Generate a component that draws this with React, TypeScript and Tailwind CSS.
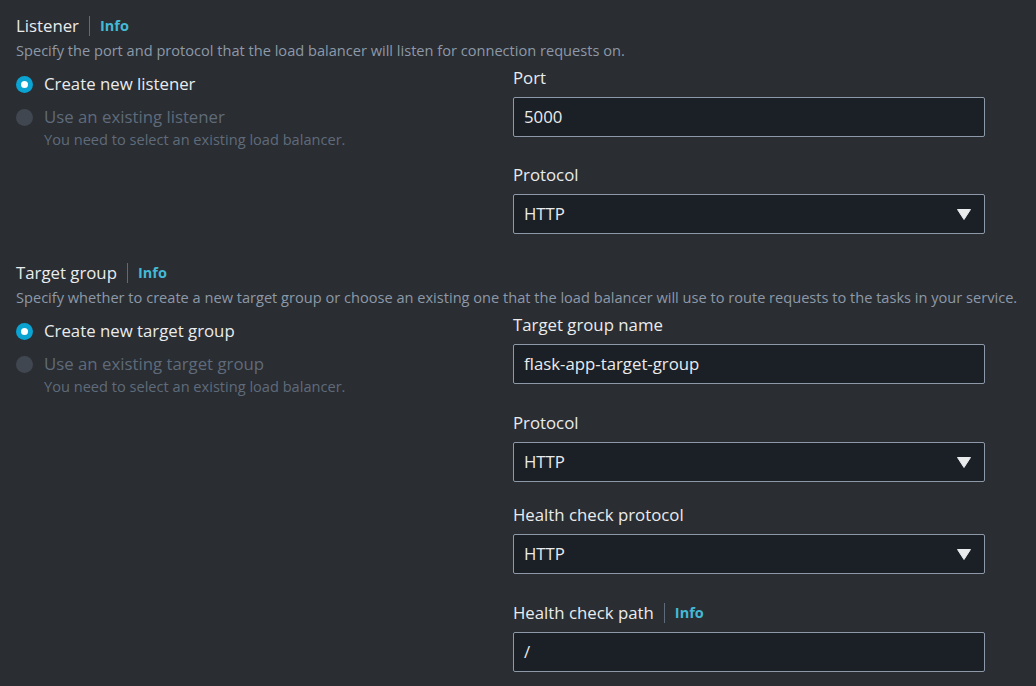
import React from "react";

const Info = () => (
  <>
    <span className="mx-[10px] h-[20px] w-px bg-[#5f6b7a]" />
    <span className="text-[14.5px] font-bold text-[#44b9d6]">Info</span>
  </>
);

const Radio = ({ checked, label, help }: { checked?: boolean; label: string; help?: string }) => (
  <div className="flex items-start gap-[11px]">
    <span
      className={
        checked
          ? "mt-[4px] flex h-[17px] w-[17px] items-center justify-center rounded-full bg-[#0aa3d2]"
          : "mt-[4px] h-[17px] w-[17px] rounded-full bg-[#414750]"
      }
    >
      {checked && <span className="h-[7px] w-[7px] rounded-full bg-white" />}
    </span>
    <div className="flex flex-col">
      <span className={checked ? "text-[16.8px] leading-[24px] text-[#e9ebed]" : "text-[16.8px] leading-[24px] text-[#5f6b7a]"}>
        {label}
      </span>
      {help && <span className="text-[14.6px] leading-[20px] text-[#5f6b7a]">{help}</span>}
    </div>
  </div>
);

const Field = ({
  label,
  value,
  select,
  info,
  gap = "mt-[27px]",
}: {
  label: string;
  value: string;
  select?: boolean;
  info?: boolean;
  gap?: string;
}) => (
  <div className={`flex flex-col ${gap}`}>
    <div className="flex h-[22px] items-center text-[16.8px] text-[#e9ebed]">
      {label}
      {info && <Info />}
    </div>
    <div className="mt-[8px] flex h-[40px] items-center justify-between rounded-[2px] border border-[#8d99a8] bg-[#1b1f26] pl-[10px] pr-[13px] text-[16.8px] text-[#e9ebed]">
      <span>{value}</span>
      {select && (
        <svg width="14" height="11" viewBox="0 0 14 11">
          <path d="M0.5 0.5h13L7 10.5z" fill="#e9ebed" stroke="#e9ebed" strokeLinejoin="round" />
        </svg>
      )}
    </div>
  </div>
);

const Section = ({
  title,
  desc,
  create,
  existing,
  fields,
}: {
  title: string;
  desc: string;
  create: string;
  existing: string;
  fields: React.ReactNode;
}) => (
  <section className="flex flex-col">
    <div className="flex h-[26px] items-center text-[16.8px] text-[#e9ebed]">
      {title}
      <Info />
    </div>
    <p className="mt-[1px] text-[14.6px] leading-[20px] text-[#8d99a8]">{desc}</p>
    <div className="mt-[4px] grid grid-cols-[497px_472px]">
      <div className="flex flex-col gap-[9px] pt-[8px]">
        <Radio checked label={create} />
        <Radio label={existing} help="You need to select an existing load balancer." />
      </div>
      <div className="flex flex-col pt-[3px]">{fields}</div>
    </div>
  </section>
);

export default function App() {
  return (
    <div
      className="flex h-[686px] w-[1036px] flex-col gap-[26px] overflow-hidden bg-[#2a2d32] pl-[16px] pt-[13px]"
      style={{ fontFamily: "'Open Sans', 'Noto Sans', sans-serif" }}
    >
      <Section
        title="Listener"
        desc="Specify the port and protocol that the load balancer will listen for connection requests on."
        create="Create new listener"
        existing="Use an existing listener"
        fields={
          <>
            <Field label="Port" value="5000" gap="" />
            <Field label="Protocol" value="HTTP" select />
          </>
        }
      />
      <Section
        title="Target group"
        desc="Specify whether to create a new target group or choose an existing one that the load balancer will use to route requests to the tasks in your service."
        create="Create new target group"
        existing="Use an existing target group"
        fields={
          <>
            <Field label="Target group name" value="flask-app-target-group" gap="" />
            <Field label="Protocol" value="HTTP" select gap="mt-[28px]" />
            <Field label="Health check protocol" value="HTTP" select gap="mt-[22px]" />
            <Field label="Health check path" value="/" info gap="mt-[28px]" />
          </>
        }
      />
    </div>
  );
}
